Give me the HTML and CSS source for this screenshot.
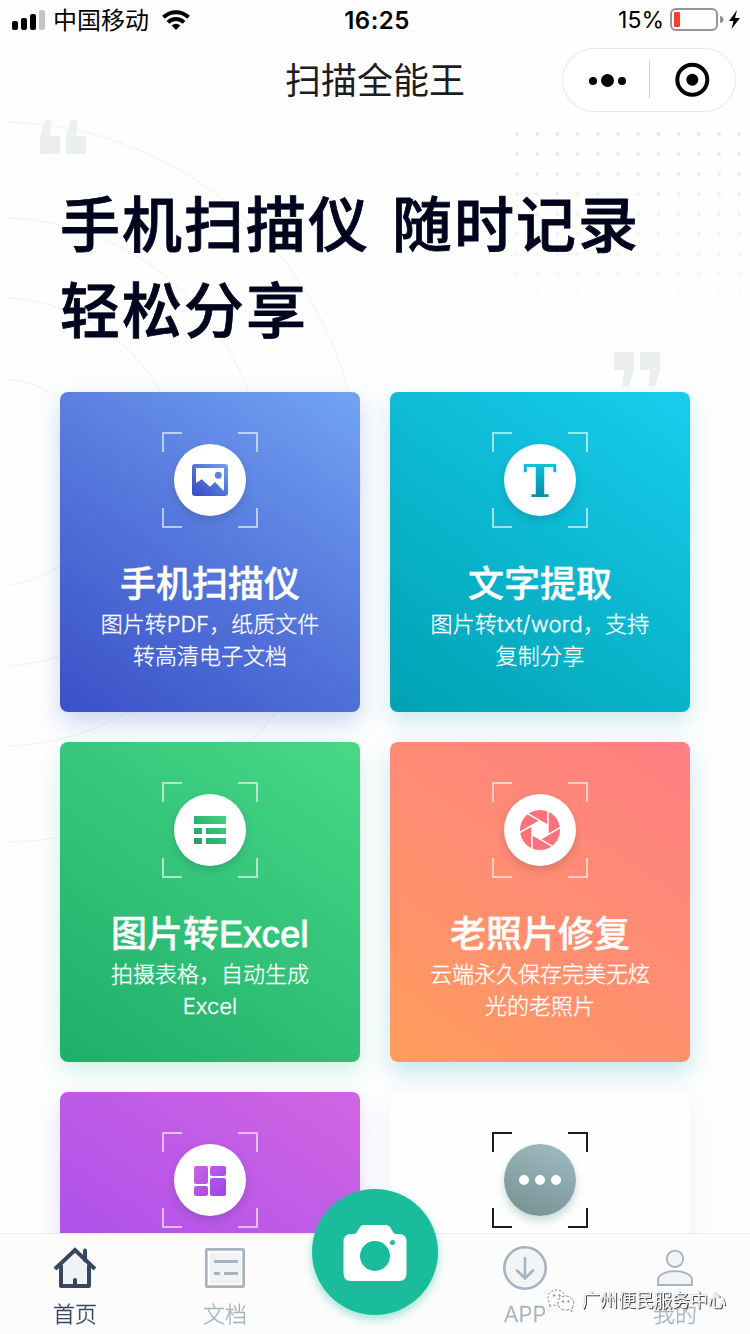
FILE: index.html
```html
<!DOCTYPE html>
<html lang="zh-CN">

<head>
    <meta charset="utf-8">
    <title>扫描全能王</title>
    <meta name="viewport" content="width=device-width, initial-scale=1">
    <link rel="stylesheet" href="styles.css">
</head>

<body>
    <svg class="backdrop" viewBox="0 0 750 900" aria-hidden="true">
        <defs>
            <pattern id="dots" x="507" y="124" width="20.2" height="20" patternUnits="userSpaceOnUse">
                <circle cx="10" cy="10" r="2" fill="#e5e7e8" />
            </pattern>
            <linearGradient id="fade" x1="0" y1="0" x2="0" y2="1">
                <stop offset="0" stop-color="#fff" />
                <stop offset="1" stop-color="#fff" stop-opacity="0.08" />
            </linearGradient>
            <mask id="dotsMask">
                <rect x="507" y="124" width="243" height="200" fill="url(#fade)" />
            </mask>
            <clipPath id="ringsClip">
                <rect x="9" y="100" width="500" height="800" />
            </clipPath>
        </defs>
        <g clip-path="url(#ringsClip)" fill="none" stroke="#f1f3f4" stroke-width="1.2">
            <circle cx="0" cy="482" r="360" />
            <circle cx="0" cy="482" r="264" />
            <circle cx="0" cy="482" r="184" />
            <circle cx="0" cy="482" r="103" />
        </g>
        <rect x="507" y="124" width="243" height="200" fill="url(#dots)" mask="url(#dotsMask)" />
        <g fill="#ebeff0">
            <path d="M45 120h6.500l-1.500 16h10v18h-20v-18z" />
            <path d="M71 120h6.500l-1.500 16h10v18h-20v-18z" />
            <path d="M614 352h20v18l-5 16h-6.500l1.500-16h-10z" />
            <path d="M640 352h20v18l-5 16h-6.500l1.500-16h-10z" />
        </g>
    </svg>

    <header class="status">
        <div class="status-left">
            <svg class="signal" width="34" height="20" viewBox="0 0 34 20">
                <rect x="0" y="11" width="6" height="9" rx="2" />
                <rect x="9" y="8" width="6" height="12" rx="2" />
                <rect x="18" y="4" width="6" height="16" rx="2" />
                <rect x="27" y="0" width="6" height="20" rx="2" fill="#c4c4c4" />
            </svg>
            <span class="carrier">中国移动</span>
            <svg class="wifi" width="28" height="20" viewBox="0 0 28 20">
                <g fill="none" stroke="#000" stroke-width="4">
                    <path d="M1.500 7.300a18 18 0 0 1 25 0" />
                    <path d="M6 12.300a11.300 11.300 0 0 1 16 0" />
                </g>
                <path d="M14 20l-4.400-4.500a6.300 6.300 0 0 1 8.800 0z" />
            </svg>
        </div>
        <span class="time">16:25</span>
        <div class="status-right">
            <span>15%</span>
            <svg width="72" height="24" viewBox="0 0 72 24">
                <rect x="1" y="1" width="46" height="21" rx="5" fill="none" stroke="#959595" stroke-width="2" />
                <rect x="4" y="4" width="6" height="15" rx="1" fill="#fd3b2f" />
                <path d="M50 8a3.500 3.500 0 0 1 0 7z" fill="#959595" />
                <path d="M67 2l-8 11h4.500l-2 8 8.500-11h-5z" />
            </svg>
        </div>
    </header>

    <nav class="navbar">
        <h1>扫描全能王</h1>
        <div class="capsule">
            <svg width="174" height="64" viewBox="0 0 174 64">
                <circle cx="31" cy="33" r="4" />
                <circle cx="45.500" cy="32.500" r="6.500" />
                <circle cx="60" cy="33" r="4" />
                <path d="M87.500 13v37" stroke="#d0d0d0" />
                <circle cx="130.300" cy="31.700" r="15" fill="none" stroke="#000" stroke-width="4" />
                <circle cx="130.300" cy="31.700" r="6" />
            </svg>
        </div>
    </nav>

    <main>
        <h2 class="slogan">手机扫描仪 随时记录<br>轻松分享</h2>

        <div class="cards">
            <section class="card card-scan">
                <div class="frame">
                    <i></i><i></i><i></i><i></i>
                    <div class="icon">
                        <svg viewBox="0 0 72 72">
                            <defs>
                                <linearGradient id="blue" x1="0" y1="1" x2="1" y2="0">
                                    <stop offset="0.100" stop-color="#3a50c7" />
                                    <stop offset="1" stop-color="#70a0f0" />
                                </linearGradient>
                            </defs>
                            <rect x="18" y="20" width="36" height="32" rx="3" fill="url(#blue)" />
                            <path d="M22 24h28v23l-9-9-5 4.700-8.300-7.400-5.700 3.700z" fill="#fff" />
                            <circle cx="44.300" cy="31.300" r="3.500" fill="#5c82e0" />
                        </svg>
                    </div>
                </div>
                <h3>手机扫描仪</h3>
                <p>图片转PDF，纸质文件<br>转高清电子文档</p>
            </section>

            <section class="card card-text">
                <div class="frame">
                    <i></i><i></i><i></i><i></i>
                    <div class="icon"><span class="letter">T</span></div>
                </div>
                <h3>文字提取</h3>
                <p class="wide">图片转txt/word，支持<br>复制分享</p>
            </section>

            <section class="card card-excel">
                <div class="frame">
                    <i></i><i></i><i></i><i></i>
                    <div class="icon">
                        <svg viewBox="0 0 72 72">
                            <defs>
                                <linearGradient id="green" gradientUnits="userSpaceOnUse" x1="20" y1="50" x2="52" y2="22">
                                    <stop offset="0" stop-color="#1d9d63" />
                                    <stop offset="1" stop-color="#47d483" />
                                </linearGradient>
                            </defs>
                            <path d="M20 22h32v8H20zM20 34h8v6h-8zM32 34h20v6H32zM20 44h8v6h-8zM32 44h20v6H32z" fill="url(#green)" />
                        </svg>
                    </div>
                </div>
                <h3>图片转<span class="latin">Excel</span></h3>
                <p>拍摄表格，自动生成<br>Excel</p>
            </section>

            <section class="card card-photo">
                <div class="frame">
                    <i></i><i></i><i></i><i></i>
                    <div class="icon">
                        <svg viewBox="-36 -36 72 72">
                            <defs>
                                <path id="blade" d="M8 -21V4.600" />
                            </defs>
                            <circle r="20" fill="#fc717b" />
                            <path d="M8 -4.600V4.600L0 9.200L-8 4.600V-4.600L0 -9.200z" fill="#fff" />
                            <g stroke="#fff" stroke-width="1.500">
                                <use href="#blade" />
                                <use href="#blade" transform="rotate(60)" />
                                <use href="#blade" transform="rotate(120)" />
                                <use href="#blade" transform="rotate(180)" />
                                <use href="#blade" transform="rotate(240)" />
                                <use href="#blade" transform="rotate(300)" />
                            </g>
                        </svg>
                    </div>
                </div>
                <h3>老照片修复</h3>
                <p>云端永久保存完美无炫<br>光的老照片</p>
            </section>

            <section class="card card-puzzle">
                <div class="frame">
                    <i></i><i></i><i></i><i></i>
                    <div class="icon">
                        <svg viewBox="0 0 72 72">
                            <defs>
                                <linearGradient id="purple" gradientUnits="userSpaceOnUse" x1="20" y1="22" x2="52" y2="52">
                                    <stop offset="0" stop-color="#cb63e4" />
                                    <stop offset="1" stop-color="#9a45ea" />
                                </linearGradient>
                            </defs>
                            <g fill="url(#purple)">
                                <rect x="20" y="22" width="14" height="18" rx="2" />
                                <rect x="20" y="42" width="14" height="10" rx="2" />
                                <rect x="36" y="22" width="16" height="10" rx="2" />
                                <rect x="36" y="34" width="16" height="18" rx="2" />
                            </g>
                        </svg>
                    </div>
                </div>
            </section>

            <section class="card card-more">
                <div class="frame">
                    <i></i><i></i><i></i><i></i>
                    <div class="icon">
                        <svg viewBox="0 0 72 72" fill="#fff">
                            <circle cx="20" cy="36" r="5" />
                            <circle cx="36" cy="36" r="5" />
                            <circle cx="52" cy="36" r="5" />
                        </svg>
                    </div>
                </div>
            </section>
        </div>
    </main>

    <footer class="tabbar">
        <div class="tab active">
            <svg width="48" height="48" viewBox="0 0 48 48">
                <path d="M10 22L24 8l14 14v20H10z" fill="#f0f2f3" />
                <path d="M34 16V6.500" stroke="#34495e" stroke-width="4" stroke-linecap="round" />
                <path d="M10 21v21h28V21" fill="none" stroke="#34495e" stroke-width="4" stroke-linejoin="round" />
                <path d="M4 25L24 6l20 19" fill="none" stroke="#34495e" stroke-width="4" />
                <path d="M22 42v-6.500q0-1.500 2-1.500t2 1.500V42z" fill="#34495e" />
            </svg>
            <span>首页</span>
        </div>
        <div class="tab">
            <svg width="48" height="48" viewBox="0 0 48 48">
                <rect x="5.300" y="5.300" width="37.400" height="37.400" rx="1" fill="#fff" stroke="#a7b3c0" stroke-width="2.700" />
                <rect x="9" y="9" width="31" height="31" fill="#f0f2f3" />
                <path d="M13 17.500h24M13 29.500h6M23 29.500h14" stroke="#a7b3c0" stroke-width="3" />
            </svg>
            <span>文档</span>
        </div>
        <div class="tab tab-camera">
            <div class="camera">
                <svg width="64" height="58" viewBox="0 0 64 58">
                    <path d="M8 10h3q2 0 3-2l3-5q1.500-2 4-2h22q2.500 0 4 2l3 5q1 2 3 2h3q7.500 0 7.500 8v31q0 8-7.500 8H8q-7.500 0-7.500-8V18q0-8 7.500-8z" fill="#fff" />
                    <circle cx="32" cy="32" r="15" fill="#1abc9c" />
                    <circle cx="49.500" cy="18.500" r="2.500" fill="#1abc9c" />
                </svg>
            </div>
        </div>
        <div class="tab">
            <svg width="48" height="48" viewBox="0 0 48 48" fill="none" stroke="#a7b3c0">
                <circle cx="24" cy="24" r="20.700" fill="#f3f4f6" stroke-width="2.600" />
                <path d="M24 14v20M16 26.500l8 8 8-8" stroke-width="2.600" stroke-linecap="round" />
            </svg>
            <span>APP</span>
        </div>
        <div class="tab">
            <svg width="48" height="48" viewBox="0 0 48 48" fill="#f3f4f6" stroke="#a7b3c0" stroke-width="1.800">
                <circle cx="24" cy="14.800" r="8.200" />
                <path d="M7 41v-5c0-6 9-8.800 17-8.800s17 2.800 17 8.800v5z" />
            </svg>
            <span>我的</span>
        </div>
    </footer>

    <div class="watermark">
        <svg width="30" height="26" viewBox="0 0 30 26" fill="#fff" stroke="#666" stroke-width="0.800">
            <path d="M4 16l-1 3 4-2c7 1.500 12-2 12-7.500C19 4.500 15 2 10.500 2S2 5 2 9.500c0 2.500.8 4.700 2 6.500z" stroke-dasharray="2 2" />
            <path d="M26 20c4-5 .5-12-7-12-10 1-9 13 0 14 1.500.200 3 0 4-.5l3 2z" stroke-dasharray="3 1.500" />
            <circle cx="8" cy="7.500" r="0.800" />
            <circle cx="13.500" cy="7.500" r="0.800" />
            <circle cx="17" cy="13.500" r="0.800" />
            <circle cx="22.500" cy="13.500" r="0.800" />
        </svg>
        <span>广州便民服务中心</span>
    </div>
</body>

</html>
```
FILE: styles.css
```css
* {
    box-sizing: border-box;
}

html,
body {
    margin: 0;
    padding: 0;
    height: 100%;
}

body {
    position: relative;
    display: flex;
    flex-direction: column;
    overflow: hidden;
    background-color: #fefefe;
    font-family: Inter, "Noto Sans CJK SC", sans-serif;
    color: #000;
}

svg {
    display: block;
}

h1,
h2,
h3,
p {
    margin: 0;
}

.backdrop {
    position: absolute;
    top: 0;
    left: 0;
    width: 750px;
    height: 900px;
    z-index: -1;
}

/* status bar */
.status {
    display: grid;
    flex: none;
    grid-template-columns: 1fr auto 1fr;
    align-items: center;
    height: 40px;
    padding: 0 8px 0 12px;
    font-size: 23px;
}

.status-left,
.status-right {
    display: flex;
    align-items: center;
}

.status-right {
    justify-content: flex-end;
    gap: 6px;
}

.carrier {
    margin: 0 13px 0 7px;
    padding-top: 2px;
    font-size: 24px;
    line-height: 38px;
}

.time {
    padding-top: 1px;
    font-size: 24px;
    font-weight: 600;
    letter-spacing: 0.5px;
}

/* title bar */
.navbar {
    display: grid;
    flex: none;
    grid-template-columns: 1fr auto 1fr;
    align-items: center;
    height: 80px;
    padding: 0 14px;
}

.navbar h1 {
    grid-column: 2;
    padding-top: 2px;
    color: #1c1c1c;
    font-size: 36px;
    font-weight: 400;
    line-height: 78px;
}

.capsule {
    justify-self: end;
    width: 174px;
    height: 64px;
    border-radius: 32px;
    background-color: #fff;
    box-shadow: inset 0 0 0 1px #e8e8e8;
}

main {
    flex: 1;
    min-height: 0;
    padding: 62px 60px 0;
    overflow: hidden;
}

.slogan {
    color: #01041d;
    font-size: 60px;
    font-weight: 500;
    letter-spacing: 2px;
    word-spacing: 4px;
    line-height: 86px;
    white-space: nowrap;
    -webkit-text-stroke: 0.8px #01041d;
}

/* feature cards */
.cards {
    display: grid;
    grid-template-columns: 300px 300px;
    grid-auto-rows: 320px;
    gap: 30px;
    margin-top: 38px;
}

.card {
    display: flex;
    flex-direction: column;
    align-items: center;
    padding-top: 40px;
    border-radius: 8px;
    color: #fff;
    text-align: center;
}

.card h3 {
    margin-top: 33px;
    font-family: "Liberation Sans", "Noto Sans CJK SC", sans-serif;
    font-size: 36px;
    font-weight: 500;
    line-height: 48px;
    -webkit-text-stroke: 0.4px #fff;
}

.card h3 .latin {
    letter-spacing: 0.4px;
    -webkit-text-stroke: 1px #fff;
}

.card p {
    margin-top: -1px;
    font-size: 22px;
    font-weight: 300;
    line-height: 32px;
    -webkit-text-stroke: 0.3px #fff;
}

.card p.wide {
    letter-spacing: 0.2px;
}

.card-scan {
    background: linear-gradient(35deg, #3a50c7, #5577dc 50%, #72a4f3);
    box-shadow: 0 10px 24px rgba(80, 120, 210, 0.3);
}

.card-text {
    background: linear-gradient(35deg, #00a1b3, #0cb7d0 50%, #18ceed);
    box-shadow: 0 10px 24px rgba(20, 160, 180, 0.22);
}

.card-excel {
    background: linear-gradient(35deg, #1dae69, #33c379 50%, #49d886);
    box-shadow: 0 10px 24px rgba(30, 190, 150, 0.2);
}

.card-photo {
    background: linear-gradient(35deg, #ff9c5c, #ff8d72 50%, #ff7f84);
    box-shadow: 0 10px 24px rgba(20, 160, 180, 0.25);
}

.card-puzzle {
    background: linear-gradient(35deg, #9b48ec, #b756e8 50%, #d165e3);
    box-shadow: 0 10px 24px rgba(120, 80, 230, 0.2);
}

.card-more {
    background-color: #fefefe;
    box-shadow: 0 10px 24px rgba(90, 120, 180, 0.12);
    color: #1c1c1c;
}

/* viewfinder corners round the icon */
.frame {
    display: grid;
    flex: none;
    grid-template-columns: 20px 1fr 20px;
    grid-template-rows: 20px 1fr 20px;
    width: 96px;
    height: 96px;
}

.frame i {
    border: 0 solid rgba(255, 255, 255, 0.6);
}

.frame i:nth-child(1) {
    grid-area: 1 / 1;
    border-width: 2px 0 0 2px;
}

.frame i:nth-child(2) {
    grid-area: 1 / 3;
    border-width: 2px 2px 0 0;
}

.frame i:nth-child(3) {
    grid-area: 3 / 1;
    border-width: 0 0 2px 2px;
}

.frame i:nth-child(4) {
    grid-area: 3 / 3;
    border-width: 0 2px 2px 0;
}

.card-more .frame i {
    border-color: #1c1c1c;
}

.icon {
    grid-area: 1 / 1 / 4 / 4;
    place-self: center;
    width: 72px;
    height: 72px;
    border-radius: 50%;
    background-color: #fff;
    box-shadow: 0 4px 8px rgba(0, 40, 60, 0.16);
}

.card-more .icon {
    background: linear-gradient(20deg, #758f91, #a0bdc4);
    box-shadow: 0 5px 9px rgba(80, 130, 140, 0.3);
}

.letter {
    display: block;
    background: linear-gradient(0deg, #05889b 25%, #14c2de 75%);
    -webkit-background-clip: text;
    background-clip: text;
    color: transparent;
    font-family: "DejaVu Serif", serif;
    font-size: 45px;
    font-weight: 700;
    line-height: 75px;
    text-align: center;
}

/* bottom tabs */
.tabbar {
    position: fixed;
    left: 0;
    right: 0;
    bottom: 0;
    display: grid;
    grid-template-columns: repeat(5, 1fr);
    height: 101px;
    border-top: 1px solid #ececee;
    background-color: #fcfcfc;
}

.tab {
    display: flex;
    flex-direction: column;
    align-items: center;
    padding-top: 10px;
    color: #a7b3c0;
    font-size: 22px;
    font-weight: 300;
    line-height: 44px;
    -webkit-text-stroke: 0.3px currentColor;
}

.tab.active {
    color: #34495e;
}

.tab-camera {
    padding-top: 0;
}

.camera {
    display: flex;
    flex: none;
    align-items: center;
    justify-content: center;
    width: 126px;
    height: 126px;
    margin-top: -45px;
    padding-top: 2px;
    border-radius: 50%;
    background-color: #1abc9c;
    box-shadow: 0 4px 10px rgba(26, 188, 156, 0.4);
}

.watermark {
    position: fixed;
    right: 24px;
    bottom: 20px;
    display: flex;
    align-items: center;
    gap: 6px;
    color: #fff;
    font-size: 18px;
    line-height: 26px;
    text-shadow: 1px 1px 0 #444, 0 0 1px #777;
}
```
